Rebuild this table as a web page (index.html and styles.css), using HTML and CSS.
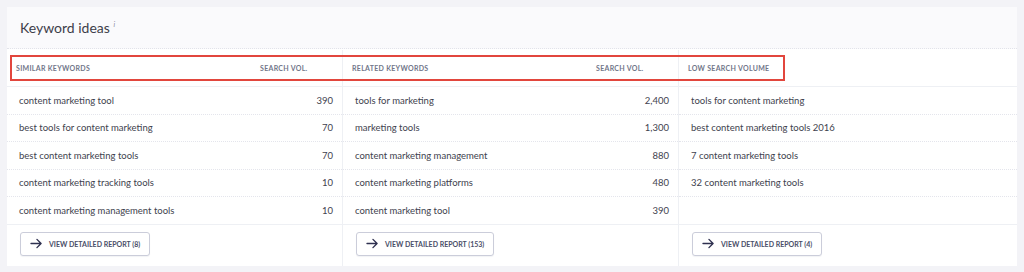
FILE: index.html
```html
<!DOCTYPE html>
<html lang="en">
<head>
  <meta charset="UTF-8" />
  <title>Keyword ideas</title>
  <link rel="stylesheet" href="styles.css">
</head>
<body>
  <div class="card">
    <div class="card-head">
      <h2>Keyword ideas <sup>i</sup></h2>
    </div>
    <div class="columns">
      <div class="col">
        <div class="col-head"><span class="label">Similar keywords</span><span class="vol-label">Search vol.</span></div>
        <div class="rows">
          <div class="row"><span>content marketing tool</span><span class="num">390</span></div>
          <div class="row"><span>best tools for content marketing</span><span class="num">70</span></div>
          <div class="row"><span>best content marketing tools</span><span class="num">70</span></div>
          <div class="row"><span>content marketing tracking tools</span><span class="num">10</span></div>
          <div class="row"><span>content marketing management tools</span><span class="num">10</span></div>
        </div>
        <div class="col-foot"><button class="report-btn"><svg viewBox="0 0 14 12" width="13" height="11"><path d="M1 6h11M7.5 1.5 12 6l-4.5 4.5" fill="none" stroke="#2f3150" stroke-width="1.5" stroke-linecap="round" stroke-linejoin="round"/></svg>View detailed report (8)</button></div>
      </div>
      <div class="col">
        <div class="col-head"><span class="label">Related keywords</span><span class="vol-label">Search vol.</span></div>
        <div class="rows">
          <div class="row"><span>tools for marketing</span><span class="num">2,400</span></div>
          <div class="row"><span>marketing tools</span><span class="num">1,300</span></div>
          <div class="row"><span>content marketing management</span><span class="num">880</span></div>
          <div class="row"><span>content marketing platforms</span><span class="num">480</span></div>
          <div class="row"><span>content marketing tool</span><span class="num">390</span></div>
        </div>
        <div class="col-foot"><button class="report-btn"><svg viewBox="0 0 14 12" width="13" height="11"><path d="M1 6h11M7.5 1.5 12 6l-4.5 4.5" fill="none" stroke="#2f3150" stroke-width="1.5" stroke-linecap="round" stroke-linejoin="round"/></svg>View detailed report (153)</button></div>
      </div>
      <div class="col">
        <div class="col-head"><span class="label">Low search volume</span></div>
        <div class="rows">
          <div class="row"><span>tools for content marketing</span></div>
          <div class="row"><span>best content marketing tools 2016</span></div>
          <div class="row"><span>7 content marketing tools</span></div>
          <div class="row"><span>32 content marketing tools</span></div>
          <div class="row empty"></div>
        </div>
        <div class="col-foot"><button class="report-btn"><svg viewBox="0 0 14 12" width="13" height="11"><path d="M1 6h11M7.5 1.5 12 6l-4.5 4.5" fill="none" stroke="#2f3150" stroke-width="1.5" stroke-linecap="round" stroke-linejoin="round"/></svg>View detailed report (4)</button></div>
      </div>
    </div>
    <div class="highlight"></div>
  </div>
</body>
</html>
```

FILE: styles.css
```css
* { margin: 0; padding: 0; box-sizing: border-box; }
body {
  font-family: Lato, 'Open Sans', sans-serif;
  background: #f3f3f7;
  color: #41424e;
  padding: 7px 7px 0 7px;
}
.card {
  position: relative;
  width: 1010px;
  background: #fff;
}
.card-head {
  height: 42px;
  background: #fafafc;
  border-bottom: 1px dotted #e2e3ea;
  padding: 12px 13px 0;
}
.card-head h2 {
  font-size: 14px;
  font-weight: 400;
  color: #3d3e4a;
}
.card-head sup {
  font-size: 7px;
  font-style: italic;
  color: #8a8c9c;
}
.columns {
  display: flex;
  margin-top: 1px;
}
.col {
  width: 336px;
  border-right: 1px solid #eef0f4;
}
.col:last-child {
  width: 338px;
  border-right: none;
}
.col-head {
  display: flex;
  align-items: center;
  height: 37px;
  padding-left: 9px;
  border-bottom: 1px solid #eef0f4;
  font-size: 7px;
  font-weight: 700;
  letter-spacing: 0.3px;
  text-transform: uppercase;
  color: #717689;
}
.col-head .label { flex: 1; }
.col-head .vol-label { width: 82px; }
.row {
  display: flex;
  align-items: center;
  height: 27.5px;
  padding: 0 9px 0 12px;
  border-bottom: 1px dotted #e4e5ec;
  font-size: 9.5px;
}
.row span:first-child { flex: 1; }
.row:last-child { border-bottom: 1px solid #eef0f4; }
.row.empty { border-bottom: 1px solid #eef0f4; }
.num { text-align: right; }
.col-foot {
  height: 41px;
  padding: 7px 0 0 13px;
}
.report-btn {
  display: flex;
  align-items: center;
  gap: 6px;
  height: 24px;
  padding: 0 9px 0 9px;
  background: #fff;
  border: 1px solid #cbcdda;
  border-radius: 3px;
  box-shadow: 0 1px 1px rgba(40, 44, 80, 0.06);
  font-family: Lato, 'Open Sans', sans-serif;
  font-size: 7px;
  font-weight: 700;
  text-transform: uppercase;
  color: #4a4e68;
}
.highlight {
  position: absolute;
  left: 3px;
  top: 48px;
  width: 775px;
  height: 26px;
  border: 2px solid #e2463d;
  pointer-events: none;
}
```
